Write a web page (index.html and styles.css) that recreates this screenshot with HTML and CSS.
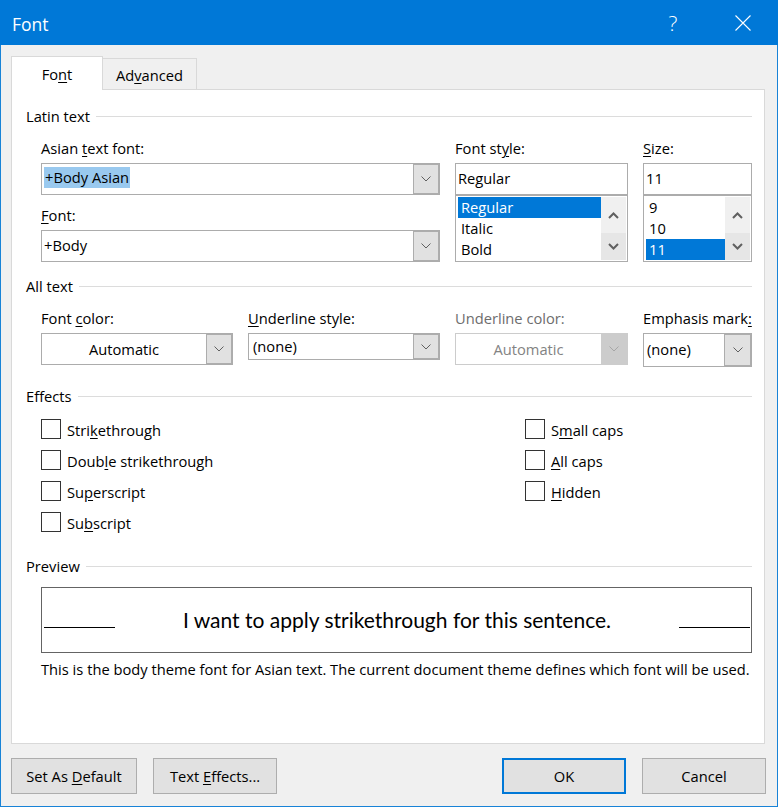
FILE: index.html
```html
<!DOCTYPE html>
<html lang="en">
<head>
<meta charset="utf-8">
<title>Font</title>
<link rel="stylesheet" href="styles.css">
</head>
<body>
<div class="window">
  <div class="titlebar">
    <div class="title">Font</div>
    <div class="caption-btns">
      <div class="cap help">?</div>
      <div class="cap close">
        <svg width="16" height="16" viewBox="0 0 16 16"><path d="M0.5 0.5 L15.5 15.5 M15.5 0.5 L0.5 15.5" stroke="#fff" stroke-width="1.1" fill="none"/></svg>
      </div>
    </div>
  </div>

  <div class="content">
    <div class="tabs">
      <div class="tab active"><span>Fo<u>n</u>t</span></div>
      <div class="tab adv"><span>Ad<u>v</u>anced</span></div>
    </div>

    <div class="panel">
      <div class="group-head"><span>Latin text</span><i></i></div>
      <div class="latin indent">
        <div class="col">
          <div class="lbl">Asian <u>t</u>ext font:</div>
          <div class="combo">
            <div class="val p2"><span class="hl">+Body Asian</span></div>
            <div class="btn"><svg width="10" height="6" viewBox="0 0 10 6"><path d="M0.5 0.5 L5 5 L9.5 0.5" fill="none" stroke="#606060"/></svg></div>
          </div>
          <div class="lbl mt"><u>F</u>ont:</div>
          <div class="combo">
            <div class="val p2"><span>+Body</span></div>
            <div class="btn"><svg width="10" height="6" viewBox="0 0 10 6"><path d="M0.5 0.5 L5 5 L9.5 0.5" fill="none" stroke="#606060"/></svg></div>
          </div>
        </div>
        <div class="col">
          <div class="lbl">Font st<u>y</u>le:</div>
          <div class="tb"><span>Regular</span></div>
          <div class="list">
            <div class="items">
              <div class="item sel">Regular</div>
              <div class="item">Italic</div>
              <div class="item">Bold</div>
            </div>
            <div class="sb">
              <div class="up"><svg width="11" height="7" viewBox="0 0 11 7"><path d="M1 6 L5.5 1.5 L10 6" fill="none" stroke="#606060" stroke-width="2"/></svg></div>
              <div class="dn"><svg width="11" height="7" viewBox="0 0 11 7"><path d="M1 1 L5.5 5.5 L10 1" fill="none" stroke="#606060" stroke-width="2"/></svg></div>
            </div>
          </div>
        </div>
        <div class="col">
          <div class="lbl"><u>S</u>ize:</div>
          <div class="tb"><span>11</span></div>
          <div class="list">
            <div class="items">
              <div class="item">9</div>
              <div class="item">10</div>
              <div class="item sel">11</div>
            </div>
            <div class="sb">
              <div class="up"><svg width="11" height="7" viewBox="0 0 11 7"><path d="M1 6 L5.5 1.5 L10 6" fill="none" stroke="#606060" stroke-width="2"/></svg></div>
              <div class="dn"><svg width="11" height="7" viewBox="0 0 11 7"><path d="M1 1 L5.5 5.5 L10 1" fill="none" stroke="#606060" stroke-width="2"/></svg></div>
            </div>
          </div>
        </div>
      </div>

      <div class="group-head gh-all"><span>All text</span><i></i></div>
      <div class="alltext indent">
        <div class="col">
          <div class="lbl">Font <u>c</u>olor:</div>
          <div class="combo">
            <div class="val center"><span>Automatic</span></div>
            <div class="btn"><svg width="10" height="6" viewBox="0 0 10 6"><path d="M0.5 0.5 L5 5 L9.5 0.5" fill="none" stroke="#606060"/></svg></div>
          </div>
        </div>
        <div class="col">
          <div class="lbl"><u>U</u>nderline style:</div>
          <div class="combo short">
            <div class="val p4"><span>(none)</span></div>
            <div class="btn"><svg width="10" height="6" viewBox="0 0 10 6"><path d="M0.5 0.5 L5 5 L9.5 0.5" fill="none" stroke="#606060"/></svg></div>
          </div>
        </div>
        <div class="col">
          <div class="lbl disabled">Underline color:</div>
          <div class="combo dis">
            <div class="val center"><span>Automatic</span></div>
            <div class="btn"><svg width="10" height="6" viewBox="0 0 10 6"><path d="M0.5 0.5 L5 5 L9.5 0.5" fill="none" stroke="#a6a6a6"/></svg></div>
          </div>
        </div>
        <div class="col">
          <div class="lbl">Emphasis mark<u>:</u></div>
          <div class="combo tall">
            <div class="val p3"><span>(none)</span></div>
            <div class="btn"><svg width="10" height="6" viewBox="0 0 10 6"><path d="M0.5 0.5 L5 5 L9.5 0.5" fill="none" stroke="#606060"/></svg></div>
          </div>
        </div>
      </div>

      <div class="group-head gh-eff"><span>Effects</span><i></i></div>
      <div class="effects indent">
        <div class="cb"><span class="box"></span><span>Stri<u>k</u>ethrough</span></div>
        <div class="cb"><span class="box"></span><span>S<u>m</u>all caps</span></div>
        <div class="cb"><span class="box"></span><span>Doub<u>l</u>e strikethrough</span></div>
        <div class="cb"><span class="box"></span><span><u>A</u>ll caps</span></div>
        <div class="cb"><span class="box"></span><span>Su<u>p</u>erscript</span></div>
        <div class="cb"><span class="box"></span><span><u>H</u>idden</span></div>
        <div class="cb"><span class="box"></span><span>Su<u>b</u>script</span></div>
      </div>

      <div class="group-head gh-prev"><span>Preview</span><i></i></div>
      <div class="preview indent">
        <span class="pline pl-left"></span>
        <span class="ptext">I want to apply strikethrough for this sentence.</span>
        <span class="pline"></span>
      </div>
      <div class="desc indent">This is the body theme font for Asian text. The current document theme defines which font will be used.</div>
    </div>

    <div class="buttons">
      <div class="pbtn wide"><span>Set As <u>D</u>efault</span></div>
      <div class="pbtn gap"><span>Text <u>E</u>ffects...</span></div>
      <div class="pbtn ok"><span>OK</span></div>
      <div class="pbtn gap"><span>Cancel</span></div>
    </div>
  </div>
</div>
</body>
</html>
```

FILE: styles.css
```css
* { box-sizing: border-box; margin: 0; padding: 0; }
html, body { width: 778px; height: 807px; overflow: hidden; }
body {
  font-family: "Open Sans", "Noto Sans", sans-serif;
  font-size: 14.7px;
  color: #000;
  background: #f0f0f0;
}
u { text-decoration: underline; text-decoration-thickness: 1px; text-underline-offset: 2px; }

.window {
  width: 778px;
  height: 807px;
  border: 1px solid #1883d7;
  border-top: 0;
  background: #f0f0f0;
  display: flex;
  flex-direction: column;
}

.titlebar {
  height: 45px;
  margin: 0 -1px;
  background: #0078d7;
  color: #fff;
  display: flex;
  align-items: center;
}
.title { padding: 2px 0 0 12px; font-size: 17.5px; }
.caption-btns { margin-left: auto; display: flex; height: 100%; }
.cap { width: 70px; display: flex; align-items: center; justify-content: center; }
.help { font-size: 21px; font-weight: 300; padding-top: 1px; }
.close svg { display: block; margin-top: 1px; }

.content {
  flex: 1;
  padding: 11px 11px 12px 10px;
  display: flex;
  flex-direction: column;
}

.tabs { display: flex; align-items: flex-end; height: 33px; position: relative; z-index: 1; }
.tab {
  height: 31px;
  border: 1px solid #d9d9d9;
  border-bottom: 0;
  border-left: 0;
  background: #f0f0f0;
  display: flex;
  align-items: center;
  justify-content: center;
  padding-top: 2px;
  white-space: nowrap;
}
.tab.active {
  width: 92px;
  height: 34px;
  margin-bottom: -1px;
  border-left: 1px solid #d9d9d9;
  background: #fff;
  padding-top: 1px;
}
.tab.adv { width: 94px; }

.panel {
  height: 655px;
  margin-right: 1px;
  border: 1px solid #d9d9d9;
  background: #fff;
  padding: 16px 12px 0 14px;
}

.group-head { display: flex; align-items: center; height: 20px; line-height: 20px; }
.group-head i { flex: 1; height: 1px; background: #dcdcdc; margin-left: 6px; }
.gh-all { margin-top: 14px; }
.gh-eff { margin-top: 19px; }
.gh-prev { margin-top: 24px; }

.indent { margin-left: 15px; }

.latin {
  display: grid;
  grid-template-columns: 399px 173px 109px;
  column-gap: 15px;
  margin-top: 12px;
}
.alltext {
  display: grid;
  grid-template-columns: 192px 192px 173px 109px;
  column-gap: 15px;
  align-items: start;
  margin-top: 12px;
}
.col { display: flex; flex-direction: column; }
.lbl { height: 20px; line-height: 20px; margin-bottom: 5px; white-space: nowrap; }
.lbl.mt { margin-top: 10px; }
.lbl.disabled { color: #6d6d6d; }

.combo {
  height: 32px;
  border: 1px solid #acacac;
  background: #fff;
  display: flex;
}
.combo.short { height: 27px; }
.combo.tall { height: 34px; }
.combo .val {
  flex: 1;
  display: flex;
  align-items: center;
  padding-bottom: 3px;
  white-space: nowrap;
}
.combo.short .val { padding-bottom: 1px; }
.combo .val.p2 { padding-left: 2px; }
.combo .val.p3 { padding-left: 3px; }
.combo .val.p4 { padding-left: 4px; }
.combo .val.center { justify-content: center; padding-bottom: 1px; }
.combo .btn {
  width: 26px;
  background: #e1e1e1;
  border: 1px solid #adadad;
  display: flex;
  align-items: center;
  justify-content: center;
}
.combo .btn svg { display: block; }
.combo.dis { border-color: #cccccc; color: #838383; }
.combo.dis .btn { background: #cccccc; border-color: #cccccc; }
.combo.tall .btn { width: 27px; }

.hl { background: #99c9ef; height: 21px; line-height: 21px; padding: 0 1px; }

.tb {
  height: 32px;
  border: 1px solid #acacac;
  padding: 0 0 3px 2px;
  display: flex;
  align-items: center;
}
.list {
  height: 67px;
  border: 1px solid #acacac;
  padding: 1px 1px 1px 2px;
  display: flex;
}
.items { flex: 1; }
.item { height: 21px; line-height: 21px; padding-left: 3px; }
.item.sel { background: #0078d7; color: #fff; }
.sb { width: 25px; display: flex; flex-direction: column; }
.sb .up, .sb .dn { display: flex; align-items: center; justify-content: center; }
.sb .up { height: 36px; background: #f0f0f0; }
.sb .dn { flex: 1; background: #e6e6e6; }
.sb svg { display: block; }

.effects {
  display: grid;
  grid-template-columns: 484px auto;
  row-gap: 11px;
  margin-top: 13px;
}
.cb { display: flex; align-items: center; height: 20px; line-height: 20px; white-space: nowrap; padding-top: 1px; }
.cb .box { width: 20px; height: 20px; border: 1px solid #333; background: #fff; margin: -1px 6px 0 0; flex: none; }

.preview {
  height: 66px;
  margin-top: 11px;
  border: 1px solid #646464;
  background: #fff;
  padding: 0 1px;
  display: flex;
  align-items: center;
}
.pline { width: 71px; height: 1px; background: #000; margin-top: 14px; flex: none; }
.pl-left { margin-left: 1px; }
.ptext {
  flex: 1;
  text-align: center;
  font-family: "Lato", "Open Sans", sans-serif;
  font-size: 21px;
  color: #000;
  white-space: nowrap;
  margin-top: -1px;
}
.desc { margin-top: 6px; line-height: 20px; white-space: nowrap; }

.buttons { display: flex; margin-top: 14px; height: 36px; }
.pbtn {
  width: 124px;
  height: 36px;
  background: #e1e1e1;
  border: 1px solid #adadad;
  display: flex;
  align-items: center;
  justify-content: center;
  white-space: nowrap;
}
.pbtn.wide { width: 126px; }
.pbtn.gap { margin-left: 16px; }
.pbtn.ok { margin-left: auto; border: 2px solid #0078d7; }
```
